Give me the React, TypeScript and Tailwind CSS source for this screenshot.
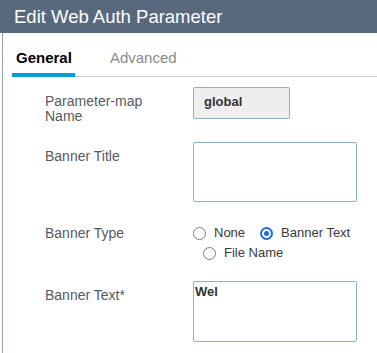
import React, { useState } from 'react';

type BannerType = 'none' | 'text' | 'file';

const Radio: React.FC<{ checked: boolean; label: string; onClick: () => void; className?: string }> = ({
  checked,
  label,
  onClick,
  className = '',
}) => (
  <button type="button" onClick={onClick} className={`flex items-center h-[20px] ${className}`}>
    {checked ? (
      <span className="w-[13px] h-[13px] rounded-full border-2 border-[#1d6fd8] flex items-center justify-center">
        <span className="w-[5px] h-[5px] rounded-full bg-[#1d6fd8]" />
      </span>
    ) : (
      <span className="w-[13px] h-[13px] rounded-full border-[1.5px] border-[#7d7d7d]" />
    )}
    <span className="ml-[8px] text-[13px] leading-[20px] text-[#3a3a3a]">{label}</span>
  </button>
);

const App: React.FC = () => {
  const [tab, setTab] = useState<'general' | 'advanced'>('general');
  const [bannerType, setBannerType] = useState<BannerType>('text');
  const [title, setTitle] = useState('');
  const [text, setText] = useState('Wel');

  return (
    <div className="w-[377px] h-[353px] overflow-hidden bg-white font-['Liberation_Sans',Arial,sans-serif]">
      {/* Header */}
      <div className="h-[33px] bg-[#58697e] pl-[14px] text-white text-[18.5px] leading-[33px]">
        Edit Web Auth Parameter
      </div>

      <div className="ml-[2px] h-[320px] border-l border-[#9aa4ae]">
        {/* Tabs */}
        <div className="ml-[9px] pt-[16px] flex items-end border-b border-[#cfcfcf]">
          <button
            type="button"
            onClick={() => setTab('general')}
            className={`pl-[4px] pr-[3px] pb-[6px] -mb-px border-b-4 text-[15px] leading-[18px] ${
              tab === 'general' ? 'border-[#049fd9] text-black font-bold text-[14.5px]' : 'border-transparent text-[#8a8a8a]'
            }`}
          >
            General
          </button>
          <button
            type="button"
            onClick={() => setTab('advanced')}
            className={`ml-[31px] px-[4px] pb-[6px] -mb-px border-b-4 text-[15px] leading-[18px] ${
              tab === 'advanced' ? 'border-[#049fd9] text-black font-bold' : 'border-transparent text-[#8a8a8a]'
            }`}
          >
            Advanced
          </button>
        </div>

        {/* Form */}
        <div className="pl-[42px] text-[14px] leading-[14px] text-[#555a60]">
          <div className="mt-[10px] h-[32px] flex">
            <div className="w-[148px] pt-[7px] leading-[15px]">
              Parameter-map
              <br />
              Name
            </div>
            <div className="w-[97px] h-[32px] border border-[#8fb2c6] rounded-[2px] bg-[#eeeeee] pl-[10px] pt-[6px] text-[13px] leading-[15px] font-bold text-[#333]">
              global
            </div>
          </div>

          <div className="mt-[23px] flex">
            <div className="w-[148px] pt-[7px]">Banner Title</div>
            <textarea
              value={title}
              onChange={(e) => setTitle(e.target.value)}
              className="w-[164px] h-[60px] border border-[#8fb2c6] rounded-[2px] resize-none outline-none px-[1px] text-[13px] leading-[15px] font-bold text-[#333]"
            />
          </div>

          <div className="mt-[21px] flex">
            <div className="w-[148px] pt-[3px]">Banner Type</div>
            <div className="flex flex-col">
              <div className="flex">
                <Radio checked={bannerType === 'none'} label="None" onClick={() => setBannerType('none')} />
                <Radio
                  checked={bannerType === 'text'}
                  label="Banner Text"
                  onClick={() => setBannerType('text')}
                  className="ml-[15px]"
                />
              </div>
              <Radio
                checked={bannerType === 'file'}
                label="File Name"
                onClick={() => setBannerType('file')}
                className="ml-[10px]"
              />
            </div>
          </div>

          <div className="mt-[18px] flex">
            <div className="w-[148px] pt-[7px]">Banner Text*</div>
            <textarea
              value={text}
              onChange={(e) => setText(e.target.value)}
              className="w-[164px] h-[61px] border border-[#8fb2c6] rounded-[2px] resize-none outline-none px-[1px] pt-[2px] text-[13px] leading-[15px] font-bold text-[#333]"
            />
          </div>
        </div>
      </div>
    </div>
  );
};

export default App;
